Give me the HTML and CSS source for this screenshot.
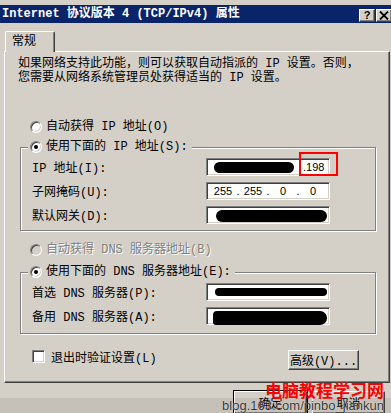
FILE: index.html
```html
<!DOCTYPE html>
<html lang="zh-CN">
<head>
    <meta charset="UTF-8">
    <meta name="viewport" content="width=device-width, initial-scale=1.0">
    <title>Internet 协议版本 4 (TCP/IPv4) 属性</title>
    <link rel="stylesheet" href="styles.css">
</head>
<body>
    <div class="window">
        <div class="titlebar">
            <span class="title">Internet 协议版本 4 (TCP/IPv4) 属性</span>
            <div class="caption-btns">
                <span class="cap-btn">?</span>
                <span class="cap-btn close">
                    <svg width="10" height="9" viewBox="0 0 10 9"><path d="M1 0.5 L9 8.5 M9 0.5 L1 8.5" stroke="#000" stroke-width="1.8"/></svg>
                </span>
            </div>
        </div>

        <div class="tabstrip">
            <span class="tab">常规</span>
        </div>

        <div class="panel">
            <p class="desc">如果网络支持此功能，则可以获取自动指派的 IP 设置。否则，<br>您需要从网络系统管理员处获得适当的 IP 设置。</p>

            <div class="option option-first"><span class="radio"></span>自动获得 IP 地址(O)</div>

            <div class="group group-ip">
                <div class="option legend"><span class="radio checked"></span>使用下面的 IP 地址(S):</div>
                <div class="fields">
                    <span>IP 地址(I):</span>
                    <span class="ipbox">
                        <span class="blob blob-ip"></span><span class="ip-tail">.198</span>
                        <span class="mark"></span>
                    </span>

                    <span>子网掩码(U):</span>
                    <span class="ipbox">
                        <span class="seg">255</span><span class="dot">.</span>
                        <span class="seg">255</span><span class="dot">.</span>
                        <span class="seg">0</span><span class="dot">.</span>
                        <span class="seg">0</span>
                    </span>

                    <span>默认网关(D):</span>
                    <span class="ipbox"><span class="blob blob-gw"></span></span>
                </div>
            </div>

            <div class="option option-disabled"><span class="radio disabled"></span>自动获得 DNS 服务器地址(B)</div>

            <div class="group group-dns">
                <div class="option legend"><span class="radio checked"></span>使用下面的 DNS 服务器地址(E):</div>
                <div class="fields">
                    <span>首选 DNS 服务器(P):</span>
                    <span class="ipbox"><span class="blob blob-dns1"></span></span>

                    <span>备用 DNS 服务器(A):</span>
                    <span class="ipbox"><span class="blob blob-dns2"></span></span>
                </div>
            </div>

            <div class="bottom-row">
                <div class="check-label"><span class="checkbox"></span>退出时验证设置(L)</div>
                <button class="btn btn-adv">高级(V)...</button>
            </div>
        </div>

        <div class="footer">
            <button class="btn btn-default">确定</button>
            <button class="btn">取消</button>
        </div>

        <div class="shade"></div>
        <div class="watermark">
            <span class="wm-title">电脑教程学习网</span>
            <span class="wm-url">blog.163.com/pinbo_jiankun</span>
        </div>
    </div>
</body>
</html>
```

FILE: styles.css
```css
* {
    box-sizing: border-box;
}

:root {
    --face: #d4d0c8;
    --shadow: #808080;
    --dark: #404040;
    --light: #ffffff;
    --title: #0a246a;
}

html, body {
    margin: 0;
    height: 100%;
    overflow: hidden;
}

body {
    background-color: var(--face);
    font-family: "Liberation Mono", "Noto Sans CJK SC", monospace;
    font-size: 12px;
    color: #000;
}

.window {
    position: relative;
    height: 413px;
    padding-top: 5px;
}

/* title bar */
.titlebar {
    display: flex;
    justify-content: space-between;
    align-items: flex-start;
    height: 18px;
    padding-left: 2px;
    background-color: var(--title);
}

.title {
    color: #fff;
    font-weight: bold;
    line-height: 18px;
    white-space: nowrap;
}

.caption-btns {
    display: flex;
    gap: 1px;
    padding-top: 4px;
    margin-right: -1px;
}

.cap-btn {
    display: flex;
    align-items: center;
    justify-content: center;
    width: 16px;
    height: 13px;
    background-color: var(--face);
    border: 1px solid;
    border-color: var(--light) var(--dark) var(--dark) var(--light);
    box-shadow: inset -1px -1px 0 var(--shadow);
    font-family: "Liberation Sans", sans-serif;
    font-weight: bold;
    font-size: 11px;
    line-height: 1;
}

/* tabs */
.tabstrip {
    display: flex;
    height: 28px;
    padding: 8px 0 0 5px;
}

.tab {
    position: relative;
    z-index: 1;
    width: 50px;
    height: 21px;
    padding: 3px 0 0 6px;
    background-color: var(--face);
    border-top: 1px solid var(--light);
    border-left: 1px solid var(--light);
    border-right: 1px solid var(--dark);
    border-radius: 2px 2px 0 0;
    box-shadow: inset -1px 0 0 var(--shadow);
    line-height: 14px;
}

.panel {
    width: 386px;
    height: 332px;
    margin-left: 4px;
    border: 1px solid;
    border-color: var(--light) var(--dark) var(--dark) var(--light);
    box-shadow: inset -1px -1px 0 var(--shadow);
}

.desc {
    margin: 0;
    padding: 5px 0 0 13px;
    line-height: 14px;
    white-space: nowrap;
}

/* radio rows */
.option {
    display: flex;
    align-items: center;
    gap: 4px;
    height: 16px;
    line-height: 16px;
    white-space: nowrap;
}

.option-first {
    margin-top: 34px;
    padding-left: 25px;
}

.option-disabled {
    margin-top: 11px;
    padding-left: 25px;
    color: var(--shadow);
    text-shadow: 1px 1px 0 var(--light);
}

.radio {
    position: relative;
    flex: none;
    width: 12px;
    height: 12px;
    border-radius: 50%;
    background-color: #fff;
    border: 1px solid;
    border-color: var(--shadow) var(--light) var(--light) var(--shadow);
    box-shadow: inset 1px 1px 0 var(--dark), inset -1px -1px 0 var(--face);
}

.radio.checked::after {
    content: "";
    position: absolute;
    left: 3px;
    top: 3px;
    width: 4px;
    height: 4px;
    border-radius: 50%;
    background-color: #000;
}

.radio.disabled {
    background-color: var(--face);
}

/* group boxes */
.group {
    margin: 0 13px 0 15px;
    border: 1px solid var(--shadow);
    box-shadow: 1px 1px 0 var(--light), inset 1px 1px 0 var(--light);
}

.group-ip {
    margin-top: 12px;
    padding-bottom: 6px;
}

.group-dns {
    margin-top: 14px;
    padding-bottom: 8px;
}

.legend {
    width: fit-content;
    margin: -9px 0 0 7px;
    padding: 0 4px 0 2px;
    background-color: var(--face);
}

.fields {
    display: grid;
    grid-template-columns: 174px 124px;
    row-gap: 6px;
    align-items: center;
    margin-top: 3px;
    padding-left: 11px;
    white-space: nowrap;
}

.ipbox {
    position: relative;
    display: flex;
    align-items: center;
    height: 18px;
    padding: 0 2px;
    background-color: #fff;
    border: 1px solid;
    border-color: var(--shadow) var(--light) var(--light) var(--shadow);
    box-shadow: inset 1px 1px 0 var(--dark), inset -1px -1px 0 var(--face);
    font-family: "Liberation Sans", sans-serif;
    font-size: 11px;
}

.seg {
    width: 24px;
    text-align: center;
}

.seg:first-child {
    margin-left: 2px;
}

.dot {
    width: 6px;
    text-align: center;
}

.ip-tail {
    margin-left: 9px;
}

/* the red box drawn over the screenshot */
.mark {
    position: absolute;
    left: 92px;
    top: -7px;
    width: 39px;
    height: 24px;
    border: 2px solid #f00;
}

.blob {
    display: block;
    background-color: #000;
    border-radius: 6px;
}

.blob-ip {
    width: 80px;
    height: 11px;
    margin-left: 5px;
}

.blob-gw {
    width: 112px;
    height: 12px;
    margin: 1px 0 0 7px;
}

.blob-dns1 {
    width: 112px;
    height: 8px;
    margin-left: 6px;
    border-radius: 4px;
}

.blob-dns2 {
    width: 115px;
    height: 14px;
    margin: 3px 0 0 4px;
    border-radius: 4px 7px 7px 3px;
}

/* bottom of the panel */
.bottom-row {
    display: flex;
    justify-content: space-between;
    align-items: flex-start;
    margin-top: 16px;
    padding: 0 30px 0 27px;
}

.check-label {
    display: flex;
    align-items: center;
    gap: 6px;
    height: 13px;
    margin-top: 0;
    white-space: nowrap;
}

.checkbox {
    width: 13px;
    height: 13px;
    background-color: #fff;
    border: 1px solid;
    border-color: var(--shadow) var(--light) var(--light) var(--shadow);
    box-shadow: inset 1px 1px 0 var(--dark), inset -1px -1px 0 var(--face);
}

.btn {
    height: 23px;
    padding: 0;
    background-color: var(--face);
    border: 1px solid;
    border-color: var(--light) var(--dark) var(--dark) var(--light);
    box-shadow: inset -1px -1px 0 var(--shadow);
    font: inherit;
    color: #000;
}

.btn-adv {
    width: 71px;
    height: 20px;
}

.footer {
    display: flex;
    justify-content: flex-end;
    gap: 5px;
    padding: 8px 6px 0 0;
}

.footer .btn {
    width: 73px;
}

.btn-default {
    outline: 1px solid #000;
}

/* watermark of the source site */
.shade {
    position: absolute;
    left: 0;
    right: 0;
    top: 398px;
    bottom: 0;
    background-color: rgba(0, 0, 0, 0.07);
}

.watermark {
    position: absolute;
    right: 7px;
    top: 381px;
    display: flex;
    flex-direction: column;
    align-items: flex-end;
}

.wm-title {
    color: #ff0000;
    font-family: "Noto Sans CJK SC", sans-serif;
    font-weight: bold;
    font-size: 17px;
    line-height: 18px;
}

.wm-url {
    color: #333;
    font-family: "Liberation Sans", sans-serif;
    font-size: 13px;
    line-height: 14px;
    text-shadow: 0 0 1px #fff;
}
```
